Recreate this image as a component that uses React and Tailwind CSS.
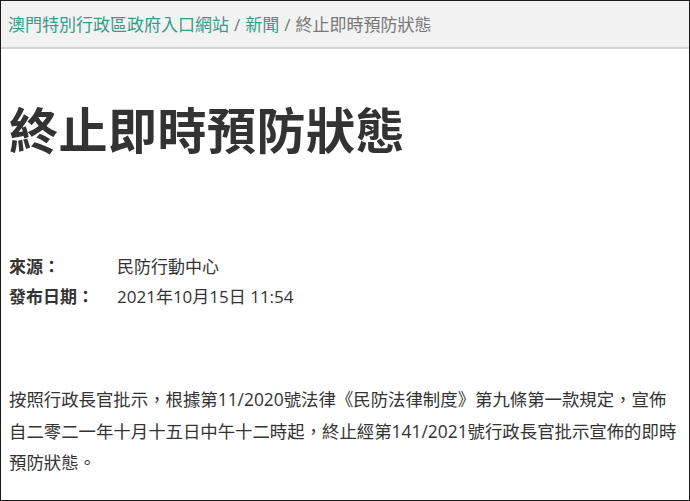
import React from "react";

const font = { fontFamily: '"Open Sans", "Noto Sans CJK TC", sans-serif' };

export default function App() {
    return (
        <div
            className="w-[690px] h-[501px] border border-[#1a1a1a] bg-white overflow-hidden text-[#333] text-[17px]"
            style={font}
        >
            <div className="h-[48px] bg-[#f2f2f2] border-b-2 border-[#d3d3d3] flex items-center px-[7px] text-[17px] leading-none">
                <span className="text-[#3a9a89]">澳門特別行政區政府入口網站</span>
                <span className="text-[#777] px-[5px]">/</span>
                <span className="text-[#3a9a89]">新聞</span>
                <span className="text-[#777] px-[5px]">/</span>
                <span className="text-[#777]">終止即時預防狀態</span>
            </div>

            <div className="px-[8px]">
                <h1 className="mt-[54px] text-[49px] leading-[54px] font-semibold text-[#333] tracking-[0.5px]">
                    終止即時預防狀態
                </h1>

                <div className="mt-[95px] leading-[30px]">
                    <div className="flex">
                        <span className="w-[108px] font-bold">來源：</span>
                        <span>民防行動中心</span>
                    </div>
                    <div className="flex">
                        <span className="w-[108px] font-bold">發布日期：</span>
                        <span>2021年10月15日 11:54</span>
                    </div>
                </div>

                <p className="mt-[72px] text-[17.4px] leading-[31.5px]">
                    按照行政長官批示，根據第11/2020號法律《民防法律制度》第九條第一款規定，宣佈自二零二一年十月十五日中午十二時起，終止經第141/2021號行政長官批示宣佈的即時預防狀態。
                </p>
            </div>
        </div>
    );
}
